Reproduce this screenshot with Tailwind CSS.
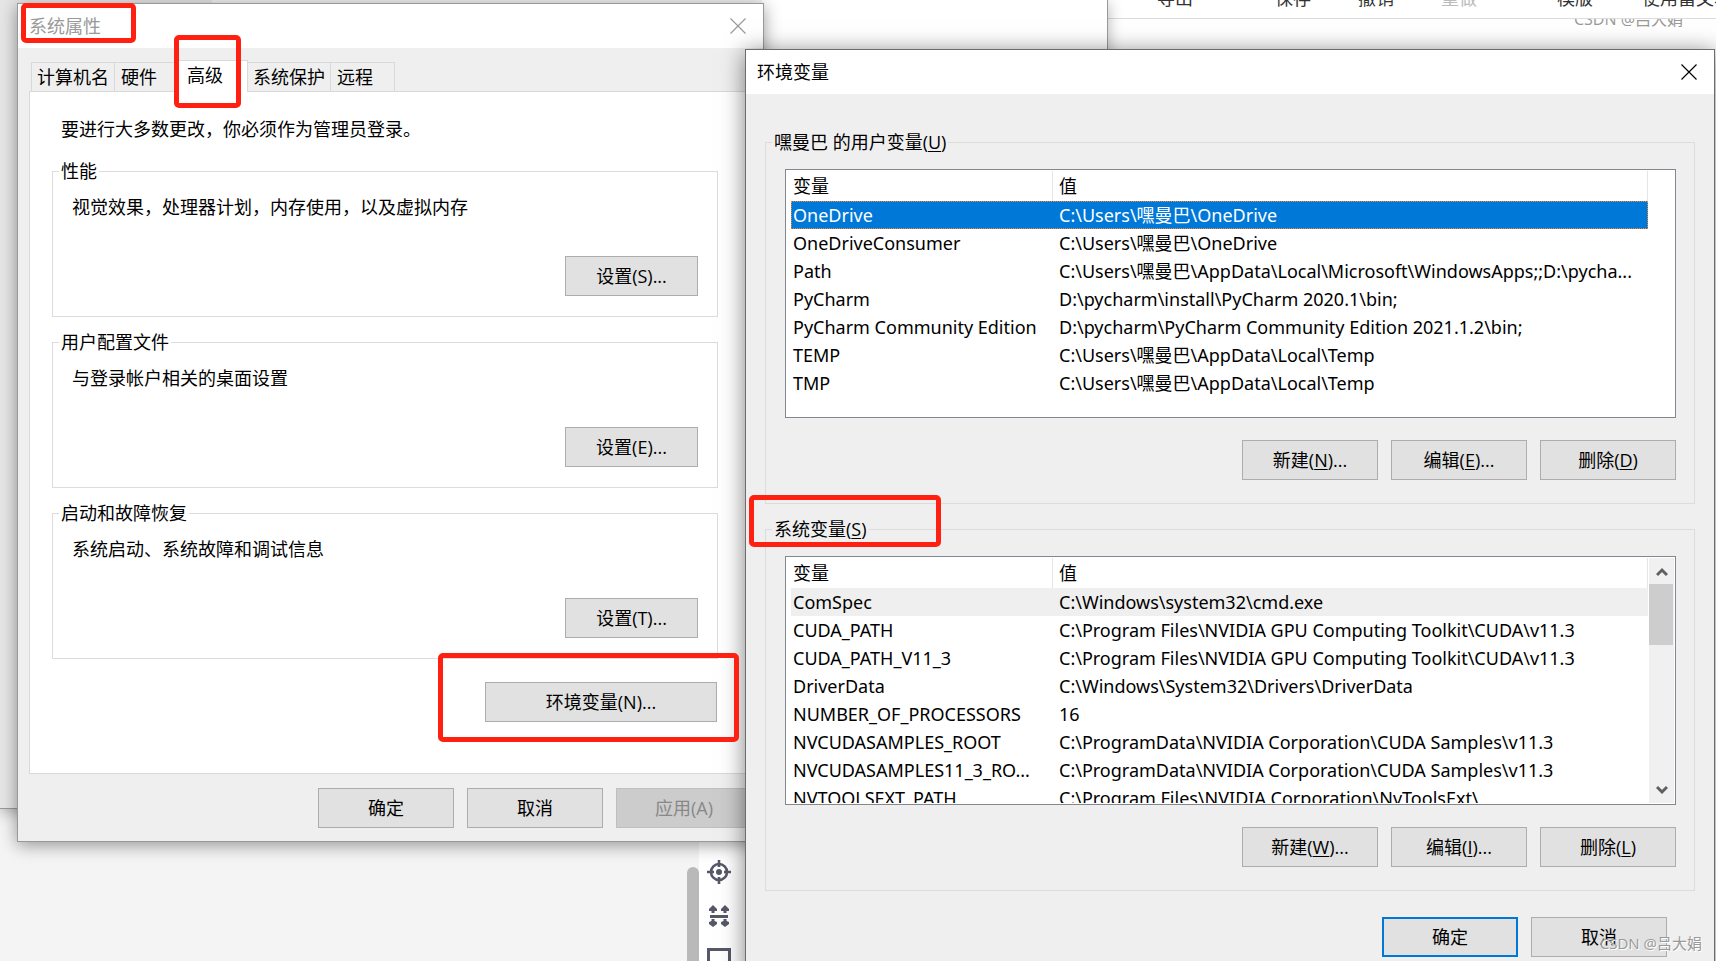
<!DOCTYPE html>
<html lang="zh-CN">
<head>
<meta charset="utf-8">
<title>环境变量</title>
<script src="https://cdn.jsdelivr.net/npm/@tailwindcss/browser@4"></script>
</head>
<body class="relative h-screen overflow-hidden bg-[#f4f4f4] font-['Open_Sans','Noto_Sans_CJK_SC',sans-serif] text-[18px] leading-6 text-black">

<!-- Editor page behind the dialogs -->
<div class="absolute inset-y-0 right-0 left-[699px] bg-white">
  <header class="flex h-[19px] items-end overflow-hidden border-b border-[#dcdcdc] pb-2 pl-[458px] whitespace-nowrap text-[#333]">
    <button class="mr-[82px] shrink-0">导出</button>
    <button class="mr-[47px] shrink-0">保存</button>
    <button class="mr-[47px] shrink-0">撤销</button>
    <button class="mr-20 shrink-0 text-[#bbb]" disabled>重做</button>
    <button class="mr-[49px] shrink-0">模版</button>
    <button class="shrink-0">使用富文本</button>
  </header>
  <div class="flex h-5 items-start justify-end overflow-hidden pr-[33px] text-[16px] text-[#999]"><span class="-mt-3">CSDN @吕大娟</span></div>
</div>
<div class="absolute top-[867px] bottom-0 left-[687px] w-3 rounded-t-full bg-[#b9b9b9]"></div>
<nav class="absolute top-[860px] left-[707px] flex flex-col gap-5 text-[#565869]" aria-label="工具">
  <button aria-label="定位"><svg class="block size-6" viewBox="0 0 24 24" fill="none" stroke="currentColor" stroke-width="2.6"><circle cx="12" cy="12" r="8"/><circle cx="12" cy="12" r="3" fill="currentColor" stroke="none"/><path d="M12 0v7M12 17v7M0 12h7M17 12h7"/></svg></button>
  <button aria-label="间距"><svg class="block size-6" viewBox="0 0 24 24" fill="currentColor"><path d="M3 11h18v3H3zM6 1l4 4v2H7.500v2h-3V7H2V5zM18 1l4 4v2h-2.500v2h-3V7H14V5zM6 23l-4-3v-2l2.500-1v-2h3v2l2.500 1v2zM18 23l-4-3v-2l2.500-1v-2h3v2l2.500 1v2z"/></svg></button>
  <button aria-label="面板"><svg class="block size-6" viewBox="0 0 24 24" fill="none" stroke="currentColor" stroke-width="3"><rect x="1.500" y="1.500" width="21" height="20"/><path d="M1 14h22" stroke-width="2" stroke="#a9aab3"/></svg></button>
</nav>

<!-- Settings window behind the dialogs -->
<div class="absolute top-0 left-0 flex h-[809px] w-[1108px] border-r border-b border-[#999] bg-white shadow-[0_3px_14px_rgba(0,0,0,0.3)]">
  <div class="w-[212px] bg-[#e6e6e6]"></div>
  <div class="w-[550px] bg-[#f2f2f2]"></div>
</div>

<!-- System properties -->
<section class="absolute top-[3px] left-[17px] w-[747px] border border-[#999] bg-[#efefef] shadow-[0_3px_16px_rgba(0,0,0,0.4)]" aria-label="系统属性">
  <header class="flex h-11 items-center justify-between bg-white pr-[17px] pl-[11px] text-[#999]">
    <h1>系统属性</h1>
    <button aria-label="关闭"><svg class="block size-4" viewBox="0 0 16 16" stroke="currentColor" stroke-width="1.200"><path d="M.5 .5l15 15M15.500 .5l-15 15"/></svg></button>
  </header>
  <div class="px-[11px] pt-3">
    <div class="flex items-end pl-[2px]" role="tablist">
      <button class="h-[29px] w-[83px] border-t border-l border-[#d9d9d9]" role="tab">计算机名</button>
      <button class="h-[29px] w-[65px] border-t border-l border-[#d9d9d9] pl-1.5 text-left" role="tab">硬件</button>
      <button class="relative -mb-px h-8 w-[69px] border-t border-r border-[#d9d9d9] bg-white pb-1 pl-2 text-left" role="tab" aria-selected="true">高级</button>
      <button class="h-[29px] w-[82px] border-t border-[#d9d9d9]" role="tab">系统保护</button>
      <button class="h-[29px] w-[65px] border-x border-t border-[#d9d9d9] pl-1.5 text-left" role="tab">远程</button>
    </div>
    <div class="border border-[#d9d9d9] bg-white pt-[25px] pr-[33px] pb-[51px] pl-[22px]" role="tabpanel">
      <p class="pl-[9px]">要进行大多数更改，你必须作为管理员登录。</p>
      <div class="mt-[18px] flex flex-col gap-[13px]">
        <fieldset class="h-[158px] border border-[#dcdcdc] pr-[19px] pl-[6px]">
          <legend class="px-[2px]">性能</legend>
          <p class="mt-3 pl-[13px]">视觉效果，处理器计划，内存使用，以及虚拟内存</p>
          <div class="mt-[37px] flex justify-end"><button class="h-10 w-[133px] border border-[#adadad] bg-[#e1e1e1]">设置(S)...</button></div>
        </fieldset>
        <fieldset class="h-[158px] border border-[#dcdcdc] pr-[19px] pl-[6px]">
          <legend class="px-[2px]">用户配置文件</legend>
          <p class="mt-3 pl-[13px]">与登录帐户相关的桌面设置</p>
          <div class="mt-[37px] flex justify-end"><button class="h-10 w-[133px] border border-[#adadad] bg-[#e1e1e1]">设置(E)...</button></div>
        </fieldset>
        <fieldset class="h-[158px] border border-[#dcdcdc] pr-[19px] pl-[6px]">
          <legend class="px-[2px]">启动和故障恢复</legend>
          <p class="mt-3 pl-[13px]">系统启动、系统故障和调试信息</p>
          <div class="mt-[37px] flex justify-end"><button class="h-10 w-[133px] border border-[#adadad] bg-[#e1e1e1]">设置(T)...</button></div>
        </fieldset>
      </div>
      <div class="mt-[23px] flex justify-end pr-px"><button class="h-10 w-[232px] border border-[#adadad] bg-[#e1e1e1]">环境变量(N)...</button></div>
    </div>
    <div class="flex justify-end gap-[13px] pt-[14px] pb-[13px]">
      <button class="h-10 w-[136px] border border-[#adadad] bg-[#e1e1e1]">确定</button>
      <button class="h-10 w-[136px] border border-[#adadad] bg-[#e1e1e1]">取消</button>
      <button class="h-10 w-[136px] border border-[#bfbfbf] bg-[#cccccc] text-[#888]" disabled>应用(A)</button>
    </div>
  </div>
</section>

<!-- Environment variables -->
<section class="absolute top-[49px] right-px left-[745px] border border-[#6d6d6d] bg-[#efefef] shadow-[0_3px_22px_rgba(0,0,0,0.5)]" aria-label="环境变量">
  <header class="flex h-11 items-center justify-between bg-white pr-[17px] pl-[11px]">
    <h1>环境变量</h1>
    <button aria-label="关闭"><svg class="block size-4" viewBox="0 0 16 16" stroke="currentColor" stroke-width="1.200"><path d="M.5 .5l15 15M15.500 .5l-15 15"/></svg></button>
  </header>
  <div class="flex flex-col gap-[13px] px-[19px] pt-9">
    <fieldset class="h-[374px] min-w-0 border border-[#dcdcdc] pr-[18px] pl-[6px]">
      <legend class="px-[2px]">嘿曼巴 的用户变量(<u class="underline-offset-2">U</u>)</legend>
      <div class="mt-[15px] ml-[13px] flex h-[249px] overflow-hidden border border-[#828790] bg-white py-px pr-[27px] pl-[5px]">
        <div class="min-w-0 flex-1 overflow-hidden">
          <table class="w-full table-fixed border-separate border-spacing-0 text-left font-['Noto_Sans','Noto_Sans_CJK_SC',sans-serif] leading-7 whitespace-nowrap">
            <colgroup><col class="w-[262px]"><col></colgroup>
            <thead><tr class="h-[30px]"><th class="border-r border-[#e5e5e5] pl-[2px] font-normal">变量</th><th class="border-r border-[#e5e5e5] pl-[6px] font-normal">值</th></tr></thead>
            <tbody>
              <tr class="h-7 bg-[#0078d7] text-white outline-1 -outline-offset-1 outline-dotted outline-[#ff8728]"><td class="pl-[2px]">OneDrive</td><td class="pl-[6px]">C:\Users\嘿曼巴\OneDrive</td></tr>
              <tr class="h-7"><td class="pl-[2px]">OneDriveConsumer</td><td class="pl-[6px]">C:\Users\嘿曼巴\OneDrive</td></tr>
              <tr class="h-7"><td class="pl-[2px]">Path</td><td class="pl-[6px]">C:\Users\嘿曼巴\AppData\Local\Microsoft\WindowsApps;;D:\pycha...</td></tr>
              <tr class="h-7"><td class="pl-[2px]">PyCharm</td><td class="pl-[6px]">D:\pycharm\install\PyCharm 2020.1\bin;</td></tr>
              <tr class="h-7"><td class="pl-[2px]">PyCharm Community Edition</td><td class="pl-[6px]">D:\pycharm\PyCharm Community Edition 2021.1.2\bin;</td></tr>
              <tr class="h-7"><td class="pl-[2px]">TEMP</td><td class="pl-[6px]">C:\Users\嘿曼巴\AppData\Local\Temp</td></tr>
              <tr class="h-7"><td class="pl-[2px]">TMP</td><td class="pl-[6px]">C:\Users\嘿曼巴\AppData\Local\Temp</td></tr>
            </tbody>
          </table>
        </div>
      </div>
      <div class="mt-[22px] flex justify-end gap-[13px]">
        <button class="h-10 w-[136px] border border-[#adadad] bg-[#e1e1e1]">新建(<u class="underline-offset-2">N</u>)...</button>
        <button class="h-10 w-[136px] border border-[#adadad] bg-[#e1e1e1]">编辑(<u class="underline-offset-2">E</u>)...</button>
        <button class="h-10 w-[136px] border border-[#adadad] bg-[#e1e1e1]">删除(<u class="underline-offset-2">D</u>)</button>
      </div>
    </fieldset>
    <fieldset class="h-[374px] min-w-0 border border-[#dcdcdc] pr-[18px] pl-[6px]">
      <legend class="px-[2px]">系统变量(<u class="underline-offset-2">S</u>)</legend>
      <div class="mt-[15px] ml-[13px] flex h-[249px] overflow-hidden border border-[#828790] bg-white py-px pr-px pl-[5px]">
        <div class="min-w-0 flex-1 overflow-hidden">
          <table class="w-full table-fixed border-separate border-spacing-0 text-left font-['Noto_Sans','Noto_Sans_CJK_SC',sans-serif] leading-7 whitespace-nowrap">
            <colgroup><col class="w-[262px]"><col></colgroup>
            <thead><tr class="h-[30px]"><th class="border-r border-[#e5e5e5] pl-[2px] font-normal">变量</th><th class="border-r border-[#e5e5e5] pl-[6px] font-normal">值</th></tr></thead>
            <tbody>
              <tr class="h-7 bg-[#efefef]"><td class="pl-[2px]">ComSpec</td><td class="pl-[6px]">C:\Windows\system32\cmd.exe</td></tr>
              <tr class="h-7"><td class="pl-[2px]">CUDA_PATH</td><td class="pl-[6px]">C:\Program Files\NVIDIA GPU Computing Toolkit\CUDA\v11.3</td></tr>
              <tr class="h-7"><td class="pl-[2px]">CUDA_PATH_V11_3</td><td class="pl-[6px]">C:\Program Files\NVIDIA GPU Computing Toolkit\CUDA\v11.3</td></tr>
              <tr class="h-7"><td class="pl-[2px]">DriverData</td><td class="pl-[6px]">C:\Windows\System32\Drivers\DriverData</td></tr>
              <tr class="h-7"><td class="pl-[2px]">NUMBER_OF_PROCESSORS</td><td class="pl-[6px]">16</td></tr>
              <tr class="h-7"><td class="pl-[2px]">NVCUDASAMPLES_ROOT</td><td class="pl-[6px]">C:\ProgramData\NVIDIA Corporation\CUDA Samples\v11.3</td></tr>
              <tr class="h-7"><td class="pl-[2px]">NVCUDASAMPLES11_3_RO...</td><td class="pl-[6px]">C:\ProgramData\NVIDIA Corporation\CUDA Samples\v11.3</td></tr>
              <tr class="h-7"><td class="pl-[2px]">NVTOOLSEXT_PATH</td><td class="pl-[6px]">C:\Program Files\NVIDIA Corporation\NvToolsExt\</td></tr>
            </tbody>
          </table>
        </div>
        <div class="ml-px flex w-[25px] flex-col bg-[#f0f0f0] text-[#606060]">
          <button class="flex h-[26px] items-center justify-center" aria-label="向上滚动"><svg class="block h-3 w-3" viewBox="0 0 12 12" fill="none" stroke="currentColor" stroke-width="3"><path d="M1 10l5-5 5 5"/></svg></button>
          <div class="mr-px h-[61px] bg-[#cdcdcd]"></div>
          <button class="mt-auto flex h-[26px] items-center justify-center" aria-label="向下滚动"><svg class="block h-3 w-3" viewBox="0 0 12 12" fill="none" stroke="currentColor" stroke-width="3"><path d="M1 3l5 5 5-5"/></svg></button>
        </div>
      </div>
      <div class="mt-[22px] flex justify-end gap-[13px]">
        <button class="h-10 w-[136px] border border-[#adadad] bg-[#e1e1e1]">新建(<u class="underline-offset-2">W</u>)...</button>
        <button class="h-10 w-[136px] border border-[#adadad] bg-[#e1e1e1]">编辑(<u class="underline-offset-2">I</u>)...</button>
        <button class="h-10 w-[136px] border border-[#adadad] bg-[#e1e1e1]">删除(<u class="underline-offset-2">L</u>)</button>
      </div>
    </fieldset>
  </div>
  <div class="flex justify-end gap-[13px] pt-[26px] pr-[47px] pb-5">
    <button class="h-10 w-[136px] border-2 border-[#0078d7] bg-[#e1e1e1]">确定</button>
    <button class="h-10 w-[136px] border border-[#adadad] bg-[#e1e1e1]">取消</button>
  </div>
</section>

<!-- Highlight frames -->
<div class="absolute top-[3px] left-[21px] h-10 w-[115px] rounded-[5px] border-5 border-[#ff2012]"></div>
<div class="absolute top-[35px] left-[174px] h-[73px] w-[67px] rounded-[5px] border-5 border-[#ff2012]"></div>
<div class="absolute top-[495px] left-[749px] h-[52px] w-[192px] rounded-[5px] border-5 border-[#ff2012]"></div>
<div class="absolute top-[653px] left-[438px] h-[89px] w-[301px] rounded-[5px] border-5 border-[#ff2012]"></div>

<div class="absolute right-[14px] bottom-1.5 text-[15px] text-[#999] [text-shadow:1px_1px_0_#fff]">CSDN @吕大娟</div>
</body>
</html>
